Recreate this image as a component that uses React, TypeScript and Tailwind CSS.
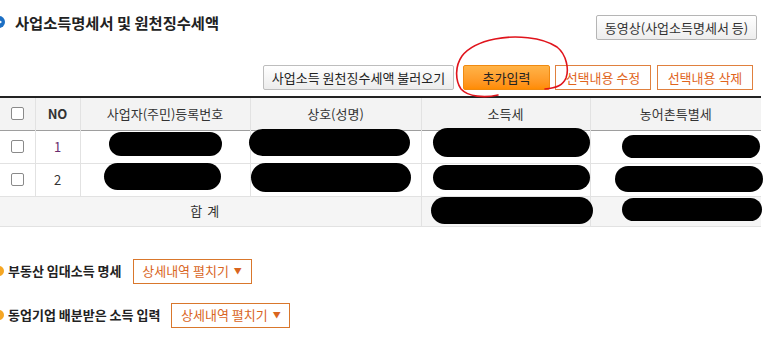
import React from "react";

const cols = [35, 45, 170, 171, 169, 171];

const redactions: [number, number, number, number][] = [
  [109, 132, 113, 24],
  [249, 129, 161, 27],
  [433, 128, 157, 29],
  [622, 135, 138, 23],
  [104, 163, 117, 27],
  [251, 163, 160, 29],
  [433, 165, 157, 25],
  [615, 166, 148, 26],
  [431, 197, 162, 27],
  [622, 198, 140, 23],
];

const Check = () => (
  <span className="block w-[13px] h-[13px] mx-auto border border-[#8a8a8a] rounded-[2px] bg-white" />
);

const ExpandButton = () => (
  <button className="h-[25px] w-[119px] justify-center border border-[#d9772c] bg-white text-[#d9651e] text-[13px] flex items-center gap-[5px]">
    상세내역 펼치기
    <span className="text-[8px] leading-none">▼</span>
  </button>
);

const SubTitle = ({ text }: { text: string }) => (
  <div className="flex items-center">
    <span className="w-[10px] h-[10px] rounded-full bg-[#f5a623] -ml-[6px] mr-[4px]" />
    <span className="text-[13px] font-bold text-[#222] mr-[11px]">{text}</span>
    <ExpandButton />
  </div>
);

export default function App() {
  return (
    <div className="relative w-[781px] h-[341px] overflow-hidden bg-white font-['Noto_Sans_CJK_KR','Noto_Sans',sans-serif] text-[#333]">
      {/* heading */}
      <div className="flex justify-between items-start pr-[24px]">
        <div className="flex items-center mt-[13px]">
          <span className="flex items-center justify-center w-[12px] h-[12px] rounded-full bg-[#1c6fc4] -ml-[7px] mr-[10px]">
            <span className="w-0 h-0 border-y-[3px] border-y-transparent border-l-[4px] border-l-white ml-[1px]" />
          </span>
          <span className="text-[15.3px] font-bold text-[#222] leading-[18px]">사업소득명세서 및 원천징수세액</span>
        </div>
        <button className="mt-[15px] h-[25px] w-[161px] border border-[#b5b5b5] rounded-[2px] bg-linear-to-b from-white to-[#ededed] text-[13px] text-[#333]">
          동영상(사업소득명세서 등)
        </button>
      </div>

      {/* action buttons */}
      <div className="flex justify-end mt-[25px] pr-[28px] text-[13px]">
        <button className="h-[25px] w-[191px] border border-[#bdbdbd] rounded-[2px] bg-linear-to-b from-white to-[#ececec] text-[#222]">
          사업소득 원천징수세액 불러오기
        </button>
        <button className="ml-[9px] h-[25px] w-[87px] border border-[#f08a10] rounded-[2px] bg-linear-to-b from-[#ffb347] to-[#ff8c00] text-[#222]">
          추가입력
        </button>
        <button className="ml-[5px] h-[25px] w-[96px] border border-[#e0803e] bg-white text-[#e0641c]">
          선택내용 수정
        </button>
        <button className="ml-[6px] h-[25px] w-[96px] border border-[#e0803e] bg-white text-[#e0641c]">
          선택내용 삭제
        </button>
      </div>

      {/* table */}
      <table className="mt-[6px] w-[761px] table-fixed border-collapse text-[13px]">
        <colgroup>
          {cols.map((w, i) => (
            <col key={i} style={{ width: w }} />
          ))}
        </colgroup>
        <thead>
          <tr className="h-[33px] bg-[#f3f3f3] border-t-2 border-t-[#222] border-b border-b-[#9e9e9e]">
            <th className="font-normal border-r border-[#e2e2e2]"><Check /></th>
            <th className="font-bold border-r border-[#e2e2e2]">NO</th>
            <th className="font-normal border-r border-[#e2e2e2]">사업자(주민)등록번호</th>
            <th className="font-normal border-r border-[#e2e2e2]">상호(성명)</th>
            <th className="font-normal border-r border-[#e2e2e2]">소득세</th>
            <th className="font-normal">농어촌특별세</th>
          </tr>
        </thead>
        <tbody>
          {[1, 2].map((n) => (
            <tr key={n} className="h-[33px] border-b border-[#e2e2e2]">
              <td className="border-r border-[#e2e2e2]"><Check /></td>
              <td className={`text-center border-r border-[#e2e2e2] ${n === 1 ? "text-[#6a2c6e]" : "text-[#333]"}`}>{n}</td>
              <td className="border-r border-[#e2e2e2]" />
              <td className="border-r border-[#e2e2e2]" />
              <td className="border-r border-[#e2e2e2]" />
              <td />
            </tr>
          ))}
          <tr className="h-[30px] bg-[#f5f5f5] border-b border-[#e2e2e2]">
            <td colSpan={4} className="text-center border-r border-[#e2e2e2] pr-[10px] tracking-[1px]">합 계</td>
            <td className="border-r border-[#e2e2e2]" />
            <td />
          </tr>
        </tbody>
      </table>

      {/* lower sections */}
      <div className="mt-[32px] flex flex-col gap-[19px]">
        <SubTitle text="부동산 임대소득 명세" />
        <SubTitle text="동업기업 배분받은 소득 입력" />
      </div>

      {/* redaction marks */}
      {redactions.map(([x, y, w, h], i) => (
        <div
          key={i}
          className="absolute bg-black rounded-full"
          style={{ left: x, top: y, width: w, height: h }}
        />
      ))}

      {/* hand-drawn annotation */}
      <svg className="absolute left-0 top-0 pointer-events-none" width="781" height="341">
        <path
          d="M498 95 C485 98 468 97 461 89 C455 80 455 66 462 56 C469 47 480 42 495 39 C515 35 542 37 557 47 C567 55 569 70 566 78 C563 85 557 88 545 89"
          fill="none"
          stroke="#e0141c"
          strokeWidth="1.6"
          strokeLinecap="round"
        />
      </svg>
    </div>
  );
}
